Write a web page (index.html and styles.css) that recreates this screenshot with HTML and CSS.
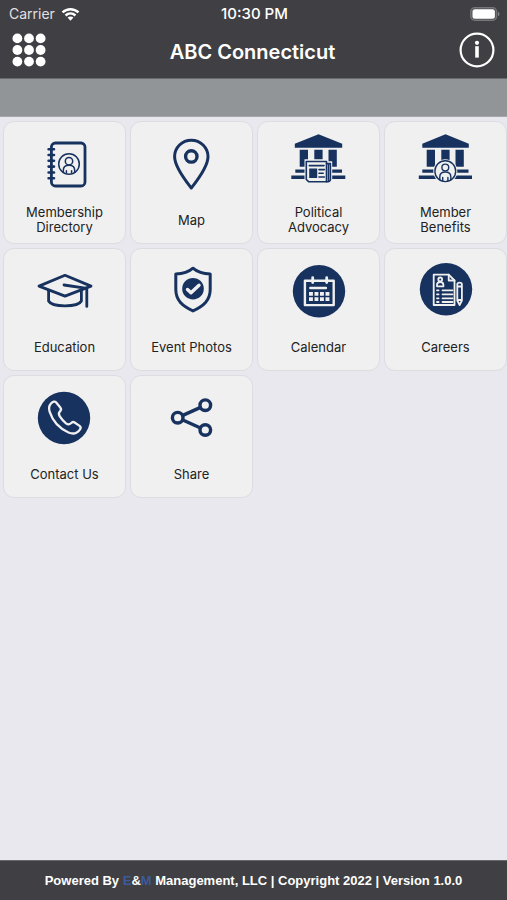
FILE: index.html
```html
<!DOCTYPE html>
<html lang="en">
<head>
<meta charset="utf-8">
<meta name="viewport" content="width=device-width, initial-scale=1">
<title>ABC Connecticut</title>
<link rel="stylesheet" href="styles.css">
</head>
<body>
<header class="header">
  <div class="status">
    <div class="carrier">
      <span>Carrier</span>
      <svg class="wifi" viewBox="0 0 20 14" aria-hidden="true"><g fill="none" stroke="#fff" stroke-width="2.6"><path d="M1.6 5.3C6.4.8 13.6.8 18.4 5.3"/><path d="M4.8 8.6c3-2.8 7.4-2.8 10.4 0"/></g><path d="M10 14 6.9 10.8c1.8-1.6 4.4-1.6 6.2 0z" fill="#fff"/></svg>
    </div>
    <span class="time">10:30 PM</span>
    <svg class="battery" viewBox="0 0 30 14" aria-hidden="true"><rect x=".7" y=".7" width="26" height="12.6" rx="4" fill="#55555a" stroke="#77777b" stroke-width="1.2"/><rect x="2.5" y="2.3" width="22.4" height="9.4" rx="2.5" fill="#fff"/><path d="M28 4.8c2 .8 2 3.6 0 4.4z" fill="#88888c"/></svg>
  </div>
  <div class="titlebar">
    <button class="icon-button" type="button" aria-label="Menu">
      <svg class="menu-icon" viewBox="0 0 34 34" aria-hidden="true"><g fill="#fff"><circle cx="5.4" cy="5.4" r="4.9"/><circle cx="17" cy="5.4" r="4.9"/><circle cx="28.6" cy="5.4" r="4.9"/><circle cx="5.4" cy="17" r="4.9"/><circle cx="17" cy="17" r="4.9"/><circle cx="28.6" cy="17" r="4.9"/><circle cx="5.4" cy="28.6" r="4.9"/><circle cx="17" cy="28.6" r="4.9"/><circle cx="28.6" cy="28.6" r="4.9"/></g></svg>
    </button>
    <h1 class="title">ABC Connecticut</h1>
    <button class="icon-button" type="button" aria-label="Information">
      <svg class="info-icon" viewBox="0 0 36 36" aria-hidden="true"><circle cx="18" cy="18" r="16.4" fill="none" stroke="#fff" stroke-width="2.2"/><circle cx="18" cy="10.8" r="2.1" fill="#fff"/><path d="M18 14.2v11.4" stroke="#fff" stroke-width="3.6"/></svg>
    </button>
  </div>
</header>
<div class="banner"></div>
<main class="grid">
  <a class="card" href="#directory">
    <svg class="icon" viewBox="0 0 61 60" aria-hidden="true"><g class="line"><rect x="17.4" y="10" width="33.6" height="43" rx="4" stroke-width="2.8"/><path d="M14.6 16.3h5.4M14.6 22h5.4M14.6 27.8h5.4M14.6 33.6h5.4M14.6 39.5h5.4M14.6 45.2h5.4" stroke-width="2.6"/><g stroke-width="1.5"><circle cx="35" cy="31" r="10.3"/><circle cx="35" cy="28.2" r="3.7"/><path d="M29.3 39.2v-1.7c0-3.4 2.3-5.2 5.7-5.2s5.7 1.8 5.7 5.2v1.7M32.4 39.8v-2M37.6 39.8v-2"/></g></g></svg>
    <span class="label">Membership Directory</span>
  </a>
  <a class="card" href="#map">
    <svg class="icon" viewBox="0 0 61 60" aria-hidden="true"><g class="line" stroke-width="3"><path d="M30.3 55C24.5 47.5 13.6 34 13.6 23.7a16.7 16.5 0 0 1 33.4 0C47 34 36.1 47.5 30.3 55z"/><circle cx="30.3" cy="23.4" r="5.7" stroke-width="3.4"/></g></svg>
    <span class="label">Map</span>
  </a>
  <a class="card" href="#advocacy">
    <svg class="icon" viewBox="0 0 61 60" aria-hidden="true"><path class="solid" d="M30.5 1.3 54.2 10.8V14.8H6.8V10.8zM11.7 16.8h8.3v17h-8.3zM26.3 16.8h8.3v17h-8.3zM40.5 16.8h8.3v17h-8.3zM7.3 36.5H54v3.2H7.3zM3.3 42.4H57.3V46H3.3z"/><path d="M16.5 26.3H39.8V28.3H44.2V47.5L41.3 50.3H19L16.5 48z" class="halo"/><g class="line" stroke-width="1.6"><path d="M18.3 28.5H38.5V48.7H20.6L18.3 46.5z"/><path d="M38.5 30.6H42.4V46.4Q42.4 48.7 38.5 48.7"/><path d="M40.5 31V48"/><path d="M21.3 32.6H36"/><path d="M31 36.6h5.4M31 40.2h4.2M31 44h5.4"/></g><path class="solid" d="M21.2 35.5h8v9.5h-8z"/></svg>
    <span class="label">Political Advocacy</span>
  </a>
  <a class="card" href="#benefits">
    <svg class="icon" viewBox="0 0 61 60" aria-hidden="true"><path class="solid" d="M30.5 1.3 53.8 10.8V14.8H7.3V10.8zM11.7 16.8h8.3v17h-8.3zM26.3 16.8h8.3v17h-8.3zM40.5 16.8h8.3v17h-8.3zM7.3 36.5H53.5v3.2H7.3zM3.8 42.4H57V46H3.8z"/><circle class="halo" cx="30.3" cy="38.2" r="12"/><g class="line" stroke-width="1.4"><circle cx="30.3" cy="38.2" r="10.4"/><circle cx="30.3" cy="34.5" r="3.4"/><path d="M24.8 46.7v-2.9c0-3.2 2.2-4.8 5.5-4.8s5.5 1.6 5.5 4.8v2.9M27.7 47.5v-3M32.9 47.5v-3"/></g></svg>
    <span class="label">Member Benefits</span>
  </a>
  <a class="card" href="#education">
    <svg class="icon" viewBox="0 0 61 60" aria-hidden="true"><g class="line" stroke-width="2.8"><path d="M31 15.3 57 26.1 31 36.1 5 26.1z"/><path d="M14.6 30.5V41C18 47.5 44 47.5 47.4 41V30.5"/><path d="M30 25 52.8 28.4V46.4"/></g></svg>
    <span class="label">Education</span>
  </a>
  <a class="card" href="#photos">
    <svg class="icon" viewBox="0 0 61 60" aria-hidden="true"><path class="line" stroke-width="3" d="M32 8.2C27.5 12.2 22.5 13.9 14.8 14V29.5C14.8 40.5 21.5 45.8 32 50.9 42.5 45.8 49.2 40.5 49.2 29.5V14C41.5 13.9 36.5 12.2 32 8.2z"/><circle class="solid" cx="32" cy="28.7" r="10.8"/><path class="light" d="M26.500 29.500 30 32.800 38 25.200" stroke-width="3.400"/></svg>
    <span class="label">Event Photos</span>
  </a>
  <a class="card" href="#calendar">
    <svg class="icon" viewBox="0 0 61 60" aria-hidden="true"><circle class="solid" cx="31" cy="31.3" r="26.2"/><g class="light"><rect x="16.9" y="20.700" width="28.800" height="24.400" stroke-width="2.400"/><path d="M24.700 17.600v5M38.700 17.600v5" stroke-width="2.800"/><path d="M22.300 28h15.600" stroke-width="2.400"/></g><path class="paper" d="M21 32h3.900v3.700h-3.900zM26.500 32h3.900v3.700h-3.900zM32 32h3.900v3.700H32zM37.500 32h3.900v3.700h-3.900zM21 37.300h3.900v3.700h-3.900zM26.500 37.300h3.900v3.700h-3.900zM32 37.300h3.900v3.700H32zM37.500 37.300h3.900v3.700h-3.900z"/></svg>
    <span class="label">Calendar</span>
  </a>
  <a class="card" href="#careers">
    <svg class="icon" viewBox="0 0 61 60" aria-hidden="true"><circle class="solid" cx="31" cy="29.3" r="26.2"/><g class="light" stroke-width="1.8"><path d="M18.7 14.700H33.700L39.500 20.500V45H18.700z"/><path d="M33.700 14.700V20.500H39.500"/><circle cx="25.200" cy="19.400" r="1.900"/><path d="M22 26.300v-1.600c0-3.400 6.400-3.400 6.400 0v1.600z"/><path d="M27.500 30.300H37.500M27.500 34.300H37.500M27.500 38.300H37.500M27.500 42H37.500"/><path d="M22 30.300h1.600M22 34.300h1.600M22 38.300h1.600M22 42h1.600"/><path d="M42.300 24.400c0-2.500 4.600-2.500 4.600 0V40.500L44.600 45 42.300 40.500zM42.300 26.500h4.600M42.300 40h4.600"/></g></svg>
    <span class="label">Careers</span>
  </a>
  <a class="card" href="#contact">
    <svg class="icon" viewBox="0 0 61 60" aria-hidden="true"><circle class="solid" cx="30" cy="31" r="26.2"/><path class="light" stroke-width="2.3" d="M17.200 16.200C18.700 14.600 20.800 14 22 15.300L26.500 20.800C27.500 22.200 27.200 23.200 26 24.300C24.200 26 24.400 27.200 25.800 29.400C27.600 32.200 29.600 34.400 32 36.300C34 37.800 35.400 37.800 36.900 36.300C38.200 34.900 39.300 34.600 40.600 35.500L45.600 38.900C47 40 46.900 41.300 45.900 42.600C43.300 46.200 38.900 47.400 34.500 45.500C25.600 41.600 18.600 33.900 15.600 24.700C14.600 21.400 15.200 18.300 17.200 16.200z"/></svg>
    <span class="label">Contact Us</span>
  </a>
  <a class="card" href="#share">
    <svg class="icon" viewBox="0 0 61 60" aria-hidden="true"><g class="line" stroke-width="3.4"><circle cx="16.7" cy="30.7" r="5.3"/><circle cx="44.3" cy="18.2" r="5.300"/><circle cx="44.300" cy="43" r="5.300"/><path d="M21.800 28.400 39 20.600M21.800 33 39 40.700"/></g></svg>
    <span class="label">Share</span>
  </a>
</main>
<footer class="footer">Powered By <span class="brand">E</span>&amp;<span class="brand">M</span> Management, LLC | Copyright 2022 | Version 1.0.0</footer>
</body>
</html>
```
FILE: styles.css
```css
* {
  box-sizing: border-box;
}

body {
  margin: 0;
  min-height: 100vh;
  display: flex;
  flex-direction: column;
  background: #e9e8ee;
  font-family: Inter, "Liberation Sans", sans-serif;
  color: #222;
}

.header {
  background: #403f43;
  color: #fff;
  border-bottom: 1px solid #68696c;
}

.status {
  display: grid;
  grid-template-columns: 1fr auto 1fr;
  align-items: center;
  height: 27px;
  padding: 0 7px 0 9px;
  font-size: 14px;
}

.carrier {
  display: flex;
  align-items: center;
  gap: 6px;
  color: #e0e0e2;
}

.wifi {
  width: 19px;
  height: 14px;
}

.time {
  font-size: 15px;
  font-weight: 500;
}

.battery {
  width: 30px;
  height: 14px;
  justify-self: end;
}

.titlebar {
  display: flex;
  align-items: center;
  justify-content: space-between;
  height: 51px;
  padding: 0 12px 5px;
}

.icon-button {
  display: flex;
  padding: 0;
  border: 0;
  background: none;
}

.menu-icon {
  width: 34px;
  height: 34px;
}

.info-icon {
  width: 36px;
  height: 36px;
}

.title {
  margin: 0;
  padding-top: 4px;
  font-size: 20px;
  font-weight: 600;
}

.banner {
  height: 38px;
  background: #929598;
  border-bottom: 1px solid #a5a7aa;
}

.grid {
  flex: 1;
  display: grid;
  grid-template-columns: repeat(4, 1fr);
  align-content: start;
  gap: 4px;
  padding: 4px 0 4px 3px;
}

.card {
  display: flex;
  flex-direction: column;
  align-items: center;
  gap: 12px;
  padding: 11px 12px 8px;
  background: #f0f0f0;
  border: 1px solid #dddde1;
  border-radius: 11px;
  color: inherit;
  text-decoration: none;
}

.icon {
  width: 61px;
  height: 60px;
}

.label {
  display: flex;
  align-items: center;
  min-height: 30px;
  font-size: 13px;
  line-height: 15px;
  text-align: center;
}

.line {
  fill: none;
  stroke: #17325f;
  stroke-linecap: round;
  stroke-linejoin: round;
}

.solid {
  fill: #17325f;
}

.halo,
.paper {
  fill: #f0f0f0;
}

.light {
  fill: none;
  stroke: #f0f0f0;
  stroke-linecap: round;
  stroke-linejoin: round;
}

.footer {
  padding: 12px 8px 11px;
  border-top: 1px solid #68696c;
  background: #403f43;
  color: #fff;
  font: bold 13px/16px "Liberation Sans", sans-serif;
  text-align: center;
}

.brand {
  color: #3c5a9c;
}
```
